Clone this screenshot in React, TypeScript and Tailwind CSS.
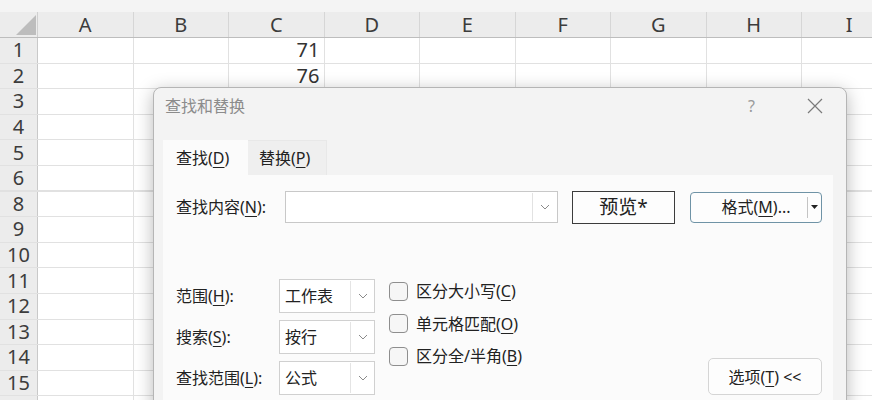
import React from 'react';

const cols = ['A', 'B', 'C', 'D', 'E', 'F', 'G', 'H', 'I'];
const rows = [1, 2, 3, 4, 5, 6, 8, 9, 10, 11, 12, 13, 14, 15, 16];
const values: Record<number, string> = { 1: '71', 2: '76' };

function Chevron() {
  return (
    <svg width="10" height="6" viewBox="0 0 10 6">
      <path d="M1 1 L5 5 L9 1" fill="none" stroke="#8a8a8a" strokeWidth="1" />
    </svg>
  );
}

function U({ c }: { c: string }) {
  return <span className="underline underline-offset-[3px] decoration-1">{c}</span>;
}

function Select({ value }: { value: string }) {
  return (
    <div className="flex h-[34px] w-[96px] border border-[#d0d0d0] bg-white">
      <div className="flex flex-1 items-center pl-[5px] text-[16px] text-[#222]">{value}</div>
      <div className="my-[1px] flex w-[24px] items-center justify-center border-l border-[#e4e4e4]">
        <Chevron />
      </div>
    </div>
  );
}

function Check({ children }: { children: React.ReactNode }) {
  return (
    <div className="flex h-[32.5px] items-center gap-[8px]">
      <div className="h-[19px] w-[19px] rounded-[4px] border border-[#8e8e8e] bg-[#f6f6f6]" />
      <span className="text-[16px] text-[#222]">{children}</span>
    </div>
  );
}

export default function App() {
  return (
    <div className="relative h-[400px] w-[872px] overflow-hidden bg-white font-['Noto_Sans','Noto_Sans_CJK_SC',sans-serif]">
      {/* spreadsheet */}
      <div className="h-[12px] bg-[#f4f4f4]" />
      <div className="grid h-[26px] grid-cols-[38px_repeat(9,95.5px)] border-b border-[#bdbdbd] bg-[#ececec]">
        <div className="relative border-r border-[#d0d0d0]">
          <svg className="absolute left-[16px] top-[3px]" width="20" height="20" viewBox="0 0 20 20">
            <path d="M20 0 L20 20 L0 20 Z" fill="#bdbdbd" />
          </svg>
        </div>
        {cols.map((c) => (
          <div
            key={c}
            className="flex items-center justify-center border-r border-[#d6d6d6] text-[20px] leading-none text-[#3c3c3c]"
          >
            {c}
          </div>
        ))}
      </div>
      {rows.map((r) => (
        <div
          key={r}
          className={`grid h-[25.6px] grid-cols-[38px_repeat(9,95.5px)] ${r === 6 ? 'border-b-2' : 'border-b'} border-[#e1e1e1]`}
        >
          <div className="flex items-center justify-center border-r border-[#c9c9c9] bg-[#ececec] text-[20px] leading-none text-[#3c3c3c]">
            {r === 16 ? '' : r}
          </div>
          {cols.map((c) => (
            <div
              key={c}
              className="flex items-center justify-end border-r border-[#e1e1e1] pr-[4px] text-[20px] leading-none text-[#333]"
            >
              {c === 'C' ? values[r] ?? '' : ''}
            </div>
          ))}
        </div>
      ))}

      {/* dialog */}
      <div className="absolute left-[153px] top-[87px] h-[330px] w-[694px] rounded-[8px] border border-[#b5b5b5] bg-[#f3f3f3] shadow-[0_4px_18px_rgba(0,0,0,0.28)]">
        <div className="flex h-[36px] items-center pl-[11px] pr-[23px]">
          <span className="text-[16px] text-[#8c8c8c]">查找和替换</span>
          <span className="ml-auto text-[16px] text-[#9a9a9a]">?</span>
          <svg className="ml-[52px]" width="16" height="16" viewBox="0 0 16 16">
            <path d="M1 1 L15 15 M15 1 L1 15" stroke="#7a7a7a" strokeWidth="1.2" />
          </svg>
        </div>
        <div className="ml-[9px] mt-[16px] flex h-[35px]">
          <div className="flex w-[85px] items-center bg-[#fbfbfb] pl-[13px] text-[16px] text-[#222]">
            查找(<U c="D" />)
          </div>
          <div className="flex w-[79px] items-center border-r border-t border-[#e8e8e8] bg-[#efefef] pl-[11px] text-[16px] text-[#222]">
            替换(<U c="P" />)
          </div>
        </div>
        <div className="ml-[9px] h-[260px] w-[670px] bg-[#fbfbfb] pl-[13px] pr-[11px] pt-[16px]">
          <div className="flex h-[32px] items-center">
            <div className="w-[109px] text-[16px] text-[#222]">
              查找内容(<U c="N" />):
            </div>
            <div className="flex h-[32px] w-[273px] border border-[#c8c8c8] bg-white">
              <div className="flex-1" />
              <div className="my-[1px] flex w-[25px] items-center justify-center border-l border-[#e2e2e2]">
                <Chevron />
              </div>
            </div>
            <div className="ml-[14px] flex h-[33px] w-[103px] items-center justify-center border-[1.5px] border-[#3c3c3c] bg-[#fdfdfd] text-[19px] text-[#222]">
              预览*
            </div>
            <div className="ml-[15px] flex h-[31px] w-[132px] rounded-[4px] border border-[#6f93a6] bg-[#fdfdfd]">
              <div className="flex flex-1 items-center justify-center pl-[14px] text-[16px] text-[#222]">
                格式(<U c="M" />)...
              </div>
              <div className="my-[4px] w-px bg-[#c4c4c4]" />
              <div className="flex w-[13px] items-center justify-center">
                <svg width="7" height="4" viewBox="0 0 7 4">
                  <path d="M0 0 L7 0 L3.5 4 Z" fill="#222" />
                </svg>
              </div>
            </div>
          </div>

          <div className="mt-[56px] flex items-start">
            <div className="grid grid-cols-[103px_96px] items-center gap-y-[7px]">
              <div className="text-[16px] text-[#222]">
                范围(<U c="H" />):
              </div>
              <Select value="工作表" />
              <div className="text-[16px] text-[#222]">
                搜索(<U c="S" />):
              </div>
              <Select value="按行" />
              <div className="text-[16px] text-[#222]">
                查找范围(<U c="L" />):
              </div>
              <Select value="公式" />
            </div>
            <div className="-mt-[4px] ml-[14px] flex flex-col">
              <Check>
                区分大小写(<U c="C" />)
              </Check>
              <Check>
                单元格匹配(<U c="O" />)
              </Check>
              <Check>
                区分全/半角(<U c="B" />)
              </Check>
            </div>
            <div className="ml-auto mt-[79px] flex h-[37px] w-[114px] items-center justify-center rounded-[5px] border border-[#d5d5d5] bg-[#fdfdfd] text-[16px] text-[#222]">
              选项(<U c="T" />) &lt;&lt;
            </div>
          </div>
        </div>
      </div>
    </div>
  );
}
